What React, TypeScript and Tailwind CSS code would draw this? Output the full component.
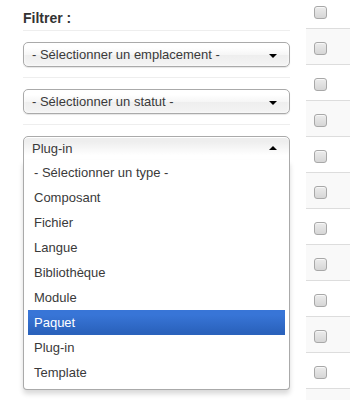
import React from "react";

function Caret({ up = false }: { up?: boolean }) {
  return up ? (
    <span className="block w-0 h-0 border-x-[4px] border-x-transparent border-b-[4px] border-b-black" />
  ) : (
    <span className="block w-0 h-0 border-x-[4px] border-x-transparent border-t-[4px] border-t-black" />
  );
}

function Hr({ first = false }: { first?: boolean }) {
  return (
    <div
      className={
        first
          ? "mt-[5px] mb-[10px] h-[2px] border-t border-t-[#eee] border-b border-b-white"
          : "my-[10px] h-[2px] border-t border-t-[#eee] border-b border-b-white"
      }
    />
  );
}

function ClosedSelect({ label }: { label: string }) {
  return (
    <div className="h-[25px] flex items-center justify-between pl-[8px] pr-[12px] border border-[#aaa] rounded-[5px] bg-[linear-gradient(#fff_20%,#f6f6f6_50%,#eee_52%,#f4f4f4_100%)] shadow-[inset_0_0_3px_#fff,0_1px_1px_rgba(0,0,0,0.1)] text-[13px] text-[#3a3a3a] leading-[23px]">
      <span className="whitespace-nowrap">{label}</span>
      <span className="mt-[3px]">
        <Caret />
      </span>
    </div>
  );
}

const items = [
  "- Sélectionner un type -",
  "Composant",
  "Fichier",
  "Langue",
  "Bibliothèque",
  "Module",
  "Paquet",
  "Plug-in",
  "Template",
];

function OpenSelect() {
  return (
    <div className="relative">
      <div className="h-[25px] flex items-center justify-between pl-[8px] pr-[12px] border border-[#aaa] rounded-t-[5px] bg-[linear-gradient(#eee_20%,#fff_80%)] shadow-[inset_0_1px_0_#fff] text-[13px] text-[#3a3a3a] leading-[23px]">
        <span className="whitespace-nowrap">Plug-in</span>
        <span className="-mt-[2px]">
          <Caret up />
        </span>
      </div>
      <div className="absolute left-0 right-0 top-full -mt-px z-10 bg-white border border-[#aaa] border-t-0 rounded-b-[4px] shadow-[0_4px_5px_rgba(0,0,0,0.15)]">
        <ul className="mr-[4px] mb-[4px] pl-[4px]">
          {items.map((it) => (
            <li
              key={it}
              className={
                it === "Paquet"
                  ? "px-[6px] py-[5px] leading-[15px] text-[13px] text-white bg-[linear-gradient(#3875d7_20%,#2a62bc_90%)]"
                  : "px-[6px] py-[5px] leading-[15px] text-[13px] text-[#3a3a3a]"
              }
            >
              {it}
            </li>
          ))}
        </ul>
      </div>
    </div>
  );
}

function Checkbox() {
  return (
    <div className="w-[13px] h-[13px] rounded-[3px] border border-[#a8a8a8] bg-[linear-gradient(#ececec,#d6d6d6)] shadow-[inset_0_1px_0_rgba(255,255,255,0.6)]" />
  );
}

export default function App() {
  const rows = Array.from({ length: 11 }, (_, i) => i);
  return (
    <div className="flex w-[350px] h-[400px] overflow-hidden bg-white font-['Liberation_Sans',Arial,sans-serif]">
      <div className="ml-[23px] w-[267px] shrink-0">
        <div className="pt-[11px] text-[14px] leading-[14px] font-bold text-[#333]">Filtrer :</div>
        <Hr first />
        <ClosedSelect label="- Sélectionner un emplacement -" />
        <Hr />
        <ClosedSelect label="- Sélectionner un statut -" />
        <Hr />
        <OpenSelect />
      </div>
      <div className="ml-[16px] flex-1">
        <div className="h-[28px] pt-[6px] pl-[8px]">
          <Checkbox />
        </div>
        {rows.map((i) => (
          <div
            key={i}
            className={
              i % 2 === 0
                ? "h-[36px] border-t border-[#ddd] pt-[13px] pl-[8px] bg-[#f9f9f9]"
                : "h-[36px] border-t border-[#ddd] pt-[13px] pl-[8px] bg-white"
            }
          >
            <Checkbox />
          </div>
        ))}
      </div>
    </div>
  );
}
